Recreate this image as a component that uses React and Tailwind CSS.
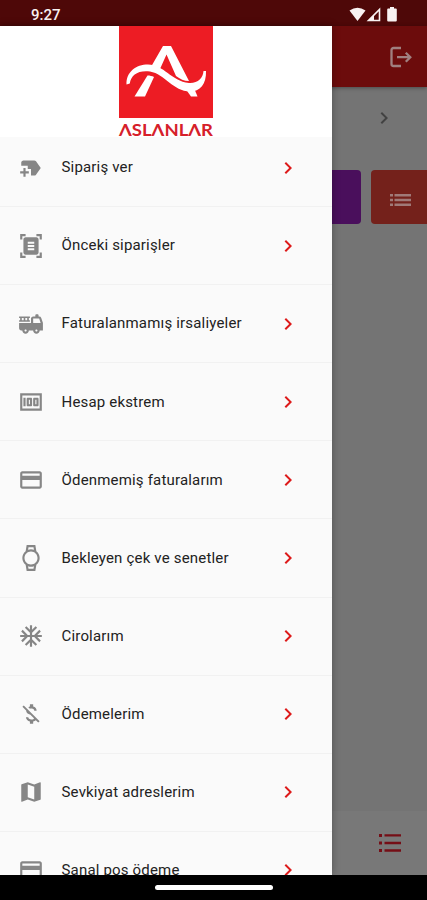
import {
  MdNewLabel,
  MdDocumentScanner,
  MdFireTruck,
  MdMoney,
  MdCreditCard,
  MdOutlineWatch,
  MdAcUnit,
  MdMoneyOff,
  MdMap,
  MdChevronRight,
} from 'react-icons/md';

const menuItems = [
  { label: 'Sipariş ver', icon: MdNewLabel },
  { label: 'Önceki siparişler', icon: MdDocumentScanner },
  { label: 'Faturalanmamış irsaliyeler', icon: MdFireTruck },
  { label: 'Hesap ekstrem', icon: MdMoney },
  { label: 'Ödenmemiş faturalarım', icon: MdCreditCard },
  { label: 'Bekleyen çek ve senetler', icon: MdOutlineWatch },
  { label: 'Cirolarım', icon: MdAcUnit },
  { label: 'Ödemelerim', icon: MdMoneyOff },
  { label: 'Sevkiyat adreslerim', icon: MdMap },
  { label: 'Sanal pos ödeme', icon: MdCreditCard },
];

function StatusBar() {
  return (
    <div className="flex h-[26px] shrink-0 items-center justify-between bg-[#4e0808] pt-1 pr-[28px] pl-[31px] text-[#f8f2f2]">
      <span className="text-[15px] leading-none font-medium">9:27</span>
      <svg viewBox="0 0 50 16" className="h-4 w-[50px]">
        <path d="M0.500 3.500Q8.500 -1.900 16.500 3.500L8.500 14Z" fill="currentColor" />
        <path d="M30.500 2.500v11H19.500Z" fill="none" stroke="currentColor" strokeWidth="1.600" />
        <path d="M19.500 13.500L25 8V13.500Z" fill="currentColor" />
        <path d="M41 0h4v1.500h1.800a1 1 0 0 1 1 1V13.500a1 1 0 0 1-1 1h-7.600a1 1 0 0 1-1-1V2.500a1 1 0 0 1 1-1H41Z" fill="currentColor" />
      </svg>
    </div>
  );
}

function Logo() {
  return (
    <div className="flex w-24 flex-col items-center">
      <svg viewBox="0 0 94 92" className="h-[92px] w-[94px]">
        <rect width="94" height="92" fill="#ed1c24" />
        <path d="M44 20h8L70 55C65 55 61 53 57 50L47.500 28.500L41 43L32.500 40Z" fill="#fff" />
        <path d="M28.500 49.500C31 49.500 33 50 35 51L26 70.500H15.500Z" fill="#fff" />
        <path d="M66 62h9l3.500 8.500H72Z" fill="#fff" />
        <path
          d="M7.500 58.500C7 46 17 38.500 29 38.500C45 38.500 52 55 70 57C79 57.500 84 52 84.500 45L87 45C87.500 58 81 65.500 71 65.500C54 65.500 46 48 31 45.500C19 44 12 49 10.800 57.500Z"
          fill="#fff"
        />
      </svg>
      <svg viewBox="0 0 94 14" className="mt-1 h-[14px] w-[94px] overflow-visible">
        <text x="0" y="14" textLength="94" lengthAdjust="spacingAndGlyphs" className="fill-[#d6202a] font-['Lato'] text-[17px] font-bold">
          ΛSLΛNLΛR
        </text>
      </svg>
    </div>
  );
}

function MenuRow({ label, icon: Icon }) {
  return (
    <div className="flex h-[78.1px] items-center border-b border-[#f1f1f1] pr-8 pl-[18px]">
      <Icon size={26} className="shrink-0 text-[#868686]" />
      <span className="ml-[17.5px] flex-1 text-[15px] tracking-[0.18px] whitespace-nowrap text-[#222]">{label}</span>
      <MdChevronRight size={24} className="shrink-0 text-[#dd1a1a]" />
    </div>
  );
}

function Drawer() {
  return (
    <aside className="absolute top-[26px] bottom-[25px] left-0 flex w-[332px] flex-col overflow-hidden bg-[#fafafa] shadow-[0_0_8px_rgba(0,0,0,0.3)]">
      <div className="z-10 flex h-[111px] shrink-0 justify-center bg-white">
        <Logo />
      </div>
      <nav className="-mt-2">
        {menuItems.map((item) => (
          <MenuRow key={item.label} {...item} />
        ))}
      </nav>
    </aside>
  );
}

// Dimmed home screen behind the open drawer
function HomeScreen() {
  return (
    <div className="flex min-h-0 flex-1 flex-col bg-[#747474]">
      <header className="flex h-[61px] shrink-0 items-center justify-end bg-[#6c0c0c] pr-[15px] shadow-[0_1px_4px_rgba(0,0,0,0.35)]">
        <svg viewBox="0 0 24 24" className="h-6 w-6" fill="none" stroke="#a08080" strokeWidth="2.3">
          <path d="M13 3H5.500a2 2 0 0 0-2 2v14a2 2 0 0 0 2 2H13" />
          <path d="M9 12.200h13M17.800 7.700l4.500 4.500-4.500 4.500" />
        </svg>
      </header>
      <div className="flex h-[61px] items-center justify-end pr-[31px]">
        <MdChevronRight size={24} className="text-[#424242]" />
      </div>
      <div className="mt-[22px] flex justify-end gap-[10px]">
        <div className="h-[54px] w-[120px] rounded bg-[#4a0f5c]" />
        <div className="flex h-[54px] w-14 items-center justify-center rounded-l bg-[#74211b] pt-1.5 pl-0.5">
          <svg viewBox="0 0 21 14" className="h-3.5 w-[21px]" fill="#a07a78">
            <path d="M0 1h3v2.500H0zM0 5.800h3v2.500H0zM0 10.600h3v2.500H0zM4.500 1H21v2.500H4.500zM4.500 5.800H21v2.500H4.500zM4.500 10.600H21v2.500H4.500z" />
          </svg>
        </div>
      </div>
      <footer className="mt-auto flex h-[64px] items-center justify-end bg-[#787878] pr-[25px]">
        <svg viewBox="0 0 24 20" className="h-5 w-6" fill="#750e16">
          <path d="M1 1h3v3H1zM1 8.500h3v3H1zM1 16h3v3H1zM6.500 1.200H23v2.400H6.500zM6.500 8.800H23v2.400H6.500zM6.500 16.300H23v2.400H6.500z" />
        </svg>
      </footer>
    </div>
  );
}

export default function App() {
  return (
    <div className="relative flex h-[900px] w-[427px] flex-col overflow-hidden bg-black font-['Roboto',sans-serif]">
      <StatusBar />
      <HomeScreen />
      <Drawer />
      <div className="flex h-[25px] shrink-0 items-center justify-center">
        <div className="h-[5px] w-[118px] rounded-full bg-white" />
      </div>
    </div>
  );
}
